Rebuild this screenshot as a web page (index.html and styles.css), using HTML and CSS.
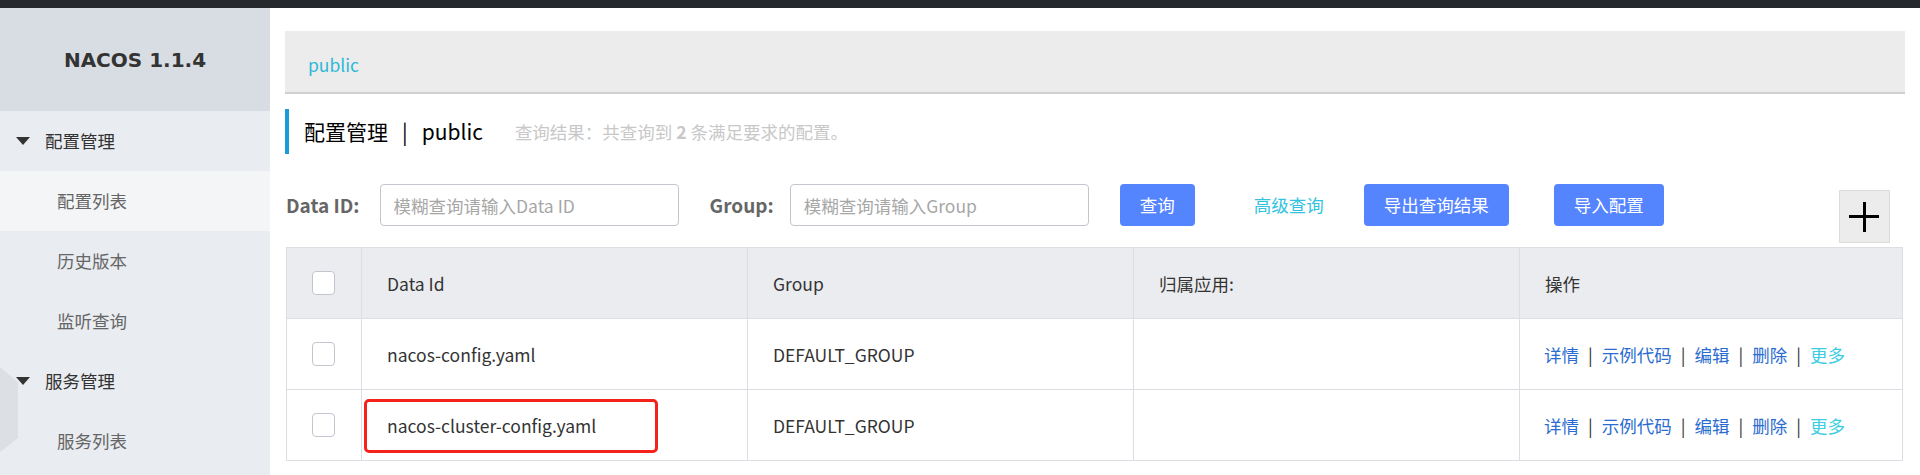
FILE: index.html
```html
<!DOCTYPE html>
<html lang="zh-CN">
<head>
<meta charset="utf-8">
<title>Nacos</title>
<link rel="stylesheet" href="styles.css">
</head>
<body>
<div class="topbar"></div>
<div class="layout">
  <aside class="sidebar">
    <div class="brand">NACOS 1.1.4</div>
    <nav class="menu">
      <div class="menu-group"><span class="caret"></span>配置管理</div>
      <div class="menu-item active">配置列表</div>
      <div class="menu-item">历史版本</div>
      <div class="menu-item">监听查询</div>
      <div class="menu-group"><span class="caret"></span>服务管理</div>
      <div class="menu-item">服务列表</div>
    </nav>
    <svg class="hex" width="20" height="86" viewBox="0 0 20 86"><polygon points="0,0 18,15 18,71 0,85" fill="#dcdfe4"/></svg>
  </aside>
  <main class="main">
    <div class="crumb"><span class="ns">public</span></div>
    <div class="title">
      <span class="title-main">配置管理<span class="title-sep">|</span>public</span>
      <span class="title-sub">查询结果：共查询到 <b>2</b> 条满足要求的配置。</span>
    </div>
    <div class="filters">
      <label class="flabel">Data ID:</label>
      <input class="finput" placeholder="模糊查询请输入Data ID">
      <label class="flabel flabel-group">Group:</label>
      <input class="finput finput-group" placeholder="模糊查询请输入Group">
      <button class="btn btn-query">查询</button>
      <span class="adv">高级查询</span>
      <button class="btn btn-export">导出查询结果</button>
      <button class="btn btn-import">导入配置</button>
      <div class="plus"><span class="plus-h"></span><span class="plus-v"></span></div>
    </div>
    <table class="grid">
      <colgroup>
        <col class="c-check"><col class="c-wide"><col class="c-wide"><col class="c-wide"><col>
      </colgroup>
      <thead>
        <tr>
          <th class="cell-check"><span class="checkbox"></span></th>
          <th>Data Id</th>
          <th>Group</th>
          <th>归属应用:</th>
          <th>操作</th>
        </tr>
      </thead>
      <tbody>
        <tr>
          <td class="cell-check"><span class="checkbox"></span></td>
          <td>nacos-config.yaml</td>
          <td>DEFAULT_GROUP</td>
          <td></td>
          <td class="ops"><a>详情</a><span class="sep">|</span><a>示例代码</a><span class="sep">|</span><a>编辑</a><span class="sep">|</span><a>删除</a><span class="sep">|</span><a class="more">更多</a></td>
        </tr>
        <tr>
          <td class="cell-check"><span class="checkbox"></span></td>
          <td class="marked">nacos-cluster-config.yaml<span class="redbox"></span></td>
          <td>DEFAULT_GROUP</td>
          <td></td>
          <td class="ops"><a>详情</a><span class="sep">|</span><a>示例代码</a><span class="sep">|</span><a>编辑</a><span class="sep">|</span><a>删除</a><span class="sep">|</span><a class="more">更多</a></td>
        </tr>
      </tbody>
    </table>
  </main>
</div>
</body>
</html>
```
FILE: styles.css
```css
* { box-sizing: border-box; }
body {
  margin: 0;
  font-family: "Noto Sans CJK SC", "Noto Sans", sans-serif;
  font-size: 17.5px;
  color: #333;
  background: #fff;
  overflow: hidden;
}
.topbar { height: 8px; background: #25292e; }
.layout { display: flex; height: 467px; }

.sidebar {
  width: 270px;
  flex: none;
  background: #e9ecf0;
  position: relative;
  overflow: hidden;
}
.brand {
  height: 103px;
  background: #d8dde3;
  display: flex;
  align-items: center;
  justify-content: center;
  font-family: "DejaVu Sans", sans-serif;
  font-weight: 700;
  font-size: 20px;
  color: #333;
}
.menu-group, .menu-item {
  height: 60px;
  display: flex;
  align-items: center;
  line-height: 1;
}
.menu-group { padding-left: 16px; color: #333; }
.caret {
  width: 0; height: 0;
  border-left: 7px solid transparent;
  border-right: 7px solid transparent;
  border-top: 8px solid #333;
  margin-right: 15px;
}
.menu-item { padding-left: 57px; color: #666; }
.menu-item.active { background: #f4f5f7; }
.hex { position: absolute; left: 0; top: 359px; }

.main { flex: 1; min-width: 0; padding: 0 15px; }
.crumb {
  margin-top: 23px;
  height: 63px;
  background: #ececec;
  border-bottom: 2px solid #cfcfcf;
  padding-left: 23px;
  display: flex;
  align-items: center;
}
.ns { color: #2cb8d8; padding-top: 6px; line-height: 1; }

.title {
  margin-top: 15px;
  height: 45px;
  border-left: 4px solid #1a9ad6;
  padding-left: 15px;
  display: flex;
  align-items: center;
  line-height: 1;
}
.title-main { font-size: 21px; color: #000; }
.title-sep { margin: 0 14px; }
.title-sub { margin-left: 32px; color: #c8c8c8; }
.title-sub b { font-weight: 700; }

.filters {
  margin-top: 30px;
  height: 63px;
  display: flex;
  align-items: flex-start;
}
.flabel {
  font-weight: 700;
  font-size: 19px;
  color: #666;
  line-height: 42px;
  margin-left: 1px;
}
.finput {
  width: 299px;
  height: 42px;
  margin-left: 20px;
  border: 1px solid #c4c6cf;
  border-radius: 4px;
  padding: 0 13px;
  font: inherit;
  color: #333;
  background: #fff;
}
.finput::placeholder { color: #a7a7a7; }
.flabel-group { margin-left: 31px; }
.finput-group { margin-left: 16px; }
.btn {
  height: 42px;
  padding: 0 20px;
  border: none;
  border-radius: 4px;
  background: #5584ff;
  color: #fff;
  font: inherit;
  line-height: 42px;
}
.btn-query { margin-left: 31px; }
.adv { margin-left: 59px; line-height: 42px; color: #33c3e0; }
.btn-export { margin-left: 40px; }
.btn-import { margin-left: 45px; }
.plus {
  margin-left: auto;
  margin-right: 15px;
  margin-top: 6px;
  width: 51px;
  height: 53px;
  background: #ececec;
  border: 1px solid #dcdcdc;
  position: relative;
}
.plus-h { position: absolute; left: 9px; top: 24px; width: 30px; height: 3px; background: #000; }
.plus-v { position: absolute; left: 23px; top: 11px; width: 3px; height: 30px; background: #000; }

.grid {
  width: calc(100% - 3px);
  margin-left: 1px;
  border-collapse: collapse;
  table-layout: fixed;
}
.c-check { width: 75px; }
.c-wide { width: 386px; }
.grid th, .grid td {
  border: 1px solid #dcdee3;
  height: 71px;
  padding: 0 0 0 25px;
  text-align: left;
  font-weight: 400;
  color: #333;
  vertical-align: middle;
}
.grid th { background: #ebecf0; }
.grid .cell-check { padding-left: 25px; }
.checkbox {
  display: block;
  width: 23px;
  height: 24px;
  border: 1px solid #c4c6cf;
  border-radius: 4px;
  background: #fff;
}
.marked { position: relative; }
.redbox {
  position: absolute;
  left: 2px;
  top: 9px;
  width: 294px;
  height: 54px;
  border: 3px solid #f5221b;
  border-radius: 5px;
}
.grid .ops { padding-left: 24px; }
.ops a { color: #2b6cd0; }
.ops a.more { color: #3ccde2; }
.sep { margin: 0 9px; color: #333; }
```
